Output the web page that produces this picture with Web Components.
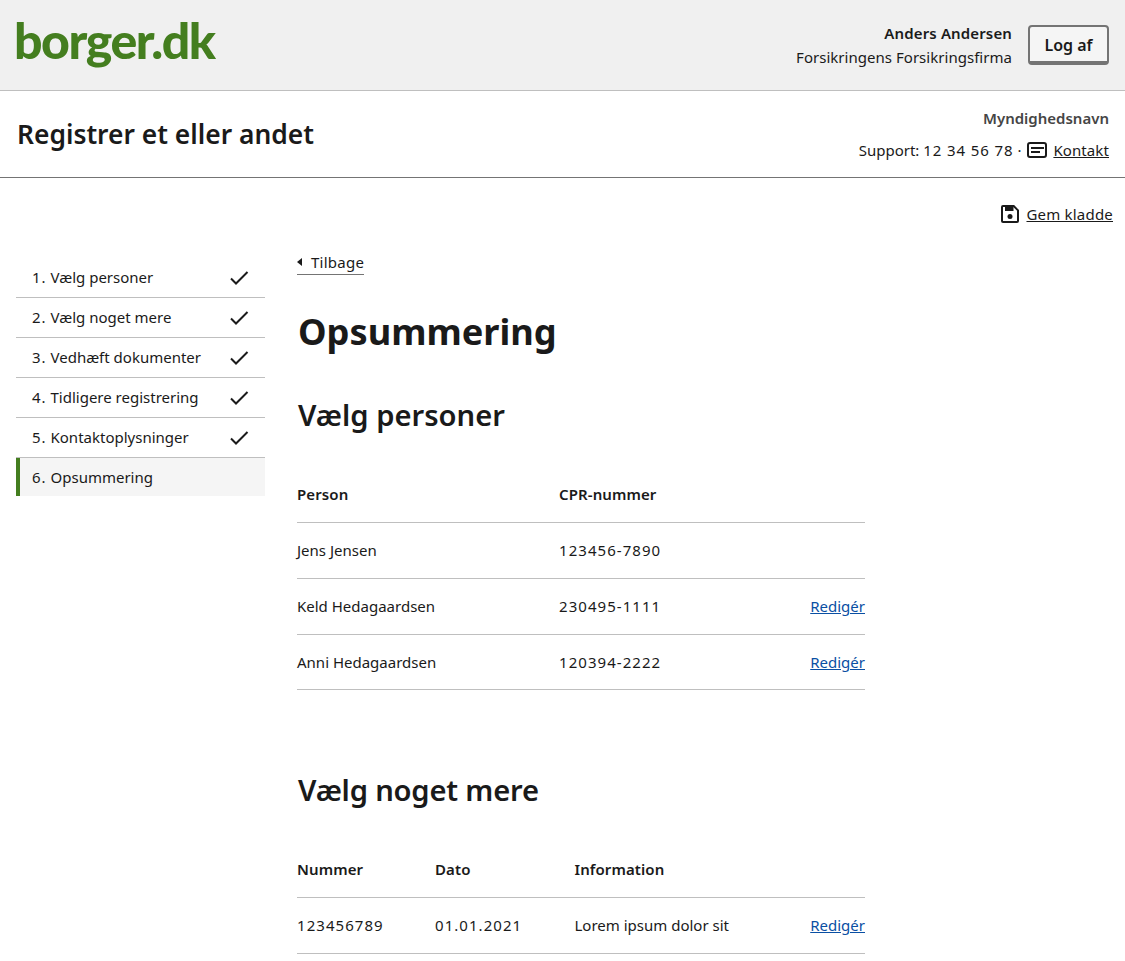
<!DOCTYPE html>
<html lang="da">
<head>
<meta charset="utf-8">
<title>Opsummering</title>
<style>
    html, body { margin: 0; padding: 0; background: #fff; }
    body { font-family: "Noto Sans", "Open Sans", sans-serif; color: #1a1a1a; font-size: 15px; }
</style>
</head>
<body>

<site-header user="Anders Andersen" company="Forsikringens Forsikringsfirma"></site-header>
<solution-header title="Registrer et eller andet" authority="Myndighedsnavn" phone="12 34 56 78"></solution-header>
<draft-bar></draft-bar>

<page-layout>
    <side-nav slot="nav" current="6" items="Vælg personer|Vælg noget mere|Vedhæft dokumenter|Tidligere registrering|Kontaktoplysninger|Opsummering"></side-nav>

    <back-link>Tilbage</back-link>
    <page-title>Opsummering</page-title>

    <summary-section heading="Vælg personer">
        <summary-table columns="262px 1fr auto" head="Person|CPR-nummer|" rows="Jens Jensen|123456-7890|;Keld Hedagaardsen|230495-1111|Redigér;Anni Hedagaardsen|120394-2222|Redigér"></summary-table>
    </summary-section>

    <summary-section heading="Vælg noget mere" class="second">
        <summary-table columns="138px 139.5px 1fr auto" head="Nummer|Dato|Information|" rows="123456789|01.01.2021|Lorem ipsum dolor sit|Redigér"></summary-table>
    </summary-section>
</page-layout>

<script>
// site-header - grey top bar with logo and logged in user
class SiteHeader extends HTMLElement {
    connectedCallback() {
        const user = this.getAttribute('user') || '';
        const company = this.getAttribute('company') || '';
        this.attachShadow({ mode: 'open' }).innerHTML = `
            <style>
                :host {
                    display: flex;
                    justify-content: space-between;
                    align-items: center;
                    height: 90px;
                    padding: 0 16px;
                    background: #f0f0f0;
                    border-bottom: 1px solid #bfbfbf;
                }
                .logo {
                    font-family: "Lato", sans-serif;
                    font-weight: 900;
                    font-size: 50px;
                    line-height: 50px;
                    letter-spacing: -1.45px;
                    color: #447e1f;
                    margin-bottom: 10px;
                    margin-left: -2px;
                }
                .user { display: flex; align-items: center; gap: 16px; }
                .who { text-align: right; font-size: 15px; line-height: 24px; letter-spacing: .03px; }
                .who b { display: block; font-weight: 600; letter-spacing: .13px; }
                button {
                    font: 600 16px "Noto Sans", sans-serif;
                    color: #1a1a1a;
                    width: 81px;
                    height: 40px;
                    padding: 1px 0 0;
                    background: #f5f5f5;
                    border: 2px solid #747474;
                    border-bottom-width: 4px;
                    border-radius: 4px;
                }
            </style>
            <div class="logo">borger.dk</div>
            <div class="user">
                <div class="who"><b>${user}</b>${company}</div>
                <button>Log af</button>
            </div>
        `;
    }
}

// solution-header - title of the solution, authority and support line
class SolutionHeader extends HTMLElement {
    connectedCallback() {
        this.attachShadow({ mode: 'open' }).innerHTML = `
            <style>
                :host {
                    display: flex;
                    justify-content: space-between;
                    align-items: center;
                    height: 86px;
                    padding: 0 16px;
                    border-bottom: 1px solid #747474;
                }
                h1 { margin: 0 0 0 1px; font-size: 26.4px; line-height: 32px; font-weight: 600; color: #1a1a1a; }
                .info { text-align: right; font-size: 15px; line-height: 32px; }
                .info b { display: block; font-weight: 600; color: #454545; }
                .support { display: flex; align-items: center; justify-content: flex-end; gap: 5px; }
                .phone { letter-spacing: .9px; }
                a { color: #1a1a1a; text-decoration: underline; letter-spacing: .1px; }
                svg { display: block; }
            </style>
            <h1>${this.getAttribute('title')}</h1>
            <div class="info">
                <b>${this.getAttribute('authority')}</b>
                <div class="support">
                    <span>Support: <span class="phone">${this.getAttribute('phone')}</span> ·</span>
                    <svg width="22" height="22" viewBox="0 0 22 22" fill="none">
                        <rect x="2" y="4" width="18" height="14" rx="2" stroke="#1a1a1a" stroke-width="2"/>
                        <path d="M5 9h13M5 13h9" stroke="#1a1a1a" stroke-width="2"/>
                    </svg>
                    <a href="#">Kontakt</a>
                </div>
            </div>
        `;
    }
}

// draft-bar - save draft link, right aligned
class DraftBar extends HTMLElement {
    connectedCallback() {
        this.attachShadow({ mode: 'open' }).innerHTML = `
            <style>
                :host {
                    display: flex;
                    justify-content: flex-end;
                    align-items: center;
                    gap: 6px;
                    padding: 24px 12px 0 0;
                    height: 24px;
                    font-size: 15px;
                }
                a { color: #1a1a1a; text-decoration: underline; letter-spacing: .2px; }
                svg { display: block; }
            </style>
            <svg width="20" height="20" viewBox="0 0 20 20">
                <path d="M3 2h10.7L18 6.3V17a1 1 0 0 1-1 1H3a1 1 0 0 1-1-1V3a1 1 0 0 1 1-1z" fill="none" stroke="#1a1a1a" stroke-width="2"/>
                <rect x="5" y="3" width="8.5" height="4" fill="#1a1a1a"/>
                <circle cx="10" cy="12.5" r="2.5" fill="#1a1a1a"/>
            </svg>
            <a href="#">Gem kladde</a>
        `;
    }
}

// page-layout - sidebar column plus main column
class PageLayout extends HTMLElement {
    connectedCallback() {
        this.attachShadow({ mode: 'open' }).innerHTML = `
            <style>
                :host {
                    display: grid;
                    grid-template-columns: 249px 568px;
                    column-gap: 32px;
                    padding: 24px 0 0 16px;
                }
                .nav { padding-top: 8px; }
            </style>
            <div class="nav"><slot name="nav"></slot></div>
            <div><slot></slot></div>
        `;
    }
}

// side-nav - numbered step list
class SideNav extends HTMLElement {
    connectedCallback() {
        const items = (this.getAttribute('items') || '').split('|');
        const current = Number(this.getAttribute('current'));
        const check = `<svg width="20" height="20" viewBox="0 0 20 20" fill="none"><path d="M2 10.5l5 5L18.5 4" stroke="#1a1a1a" stroke-width="2"/></svg>`;
        const rows = items.map((item, i) => {
            const active = i + 1 === current;
            return `<li class="${active ? 'active' : ''}"><span class="label"><span class="no">${i + 1}.</span> ${item}</span>${active ? '' : check}</li>`;
        }).join('');
        this.attachShadow({ mode: 'open' }).innerHTML = `
            <style>
                :host { display: block; font-size: 15px; }
                ul { list-style: none; margin: 0; padding: 0; }
                li {
                    display: flex;
                    justify-content: space-between;
                    align-items: center;
                    height: 39px;
                    padding: 0 16px;
                    border-bottom: 1px solid #bfbfbf;
                }
                .no { letter-spacing: 1px; }
                .label { margin-bottom: 2px; }
                li.active {
                    height: 38px;
                    border-bottom: 0;
                    border-left: 4px solid #447e1f;
                    padding-left: 12px;
                    background: #f5f5f5;
                }
                li.active .label { margin-bottom: 0; }
                svg { display: block; margin-top: 1px; }
            </style>
            <ul>${rows}</ul>
        `;
    }
}

// back-link - small triangle and underlined label
class BackLink extends HTMLElement {
    connectedCallback() {
        this.attachShadow({ mode: 'open' }).innerHTML = `
            <style>
                :host {
                    display: inline-flex;
                    align-items: center;
                    gap: 9px;
                    font-size: 15px;
                    line-height: 24px;
                    letter-spacing: .25px;
                    border-bottom: 1px solid #747474;
                }
                i { border: 4px solid transparent; border-right: 5px solid #1a1a1a; border-left: 0; }
            </style>
            <i></i><slot></slot>
        `;
    }
}

class PageTitle extends HTMLElement {
    connectedCallback() {
        this.attachShadow({ mode: 'open' }).innerHTML = `
            <style>
                :host { display: block; }
                h1 { margin: 32px 0 0 1px; font-size: 36.2px; line-height: 48px; font-weight: 700; color: #1a1a1a; }
            </style>
            <h1><slot></slot></h1>
        `;
    }
}

// summary-section - heading with a table under it
class SummarySection extends HTMLElement {
    connectedCallback() {
        this.attachShadow({ mode: 'open' }).innerHTML = `
            <style>
                :host { display: block; margin-top: 40px; }
                :host(.second) { margin-top: 79.75px; }
                h2 { margin: 0 0 32.25px 1px; font-size: 29.2px; line-height: 40px; font-weight: 600; color: #1a1a1a; }
                :host(.second) h2 { letter-spacing: -.2px; }
            </style>
            <h2>${this.getAttribute('heading')}</h2>
            <slot></slot>
        `;
    }
}

// summary-table - grid based table, rows separated by ; and cells by |
class SummaryTable extends HTMLElement {
    connectedCallback() {
        const head = this.getAttribute('head').split('|');
        const rows = this.getAttribute('rows').split(';').map(r => r.split('|'));
        const cell = c => {
            if (c === 'Redigér') return `<a href="#">${c}</a>`;
            return `<span class="${/^[\d.-]+$/.test(c) ? 'num' : ''}">${c}</span>`;
        };
        this.attachShadow({ mode: 'open' }).innerHTML = `
            <style>
                :host { display: block; font-size: 15px; }
                .row {
                    display: grid;
                    grid-template-columns: ${this.getAttribute('columns')};
                    align-items: center;
                    box-sizing: border-box;
                    height: 55.75px;
                    border-bottom: 1px solid #bfbfbf;
                }
                .row.head { font-weight: 600; letter-spacing: .1px; padding-bottom: 2px; }
                .num { letter-spacing: 1.05px; }
                a { color: #0a4fa3; text-decoration: underline; }
            </style>
            <div class="row head">${head.map(c => `<span>${c}</span>`).join('')}</div>
            ${rows.map(r => `<div class="row">${r.map(cell).join('')}</div>`).join('')}
        `;
    }
}

customElements.define('site-header', SiteHeader);
customElements.define('solution-header', SolutionHeader);
customElements.define('draft-bar', DraftBar);
customElements.define('page-layout', PageLayout);
customElements.define('side-nav', SideNav);
customElements.define('back-link', BackLink);
customElements.define('page-title', PageTitle);
customElements.define('summary-section', SummarySection);
customElements.define('summary-table', SummaryTable);
</script>
</body>
</html>
